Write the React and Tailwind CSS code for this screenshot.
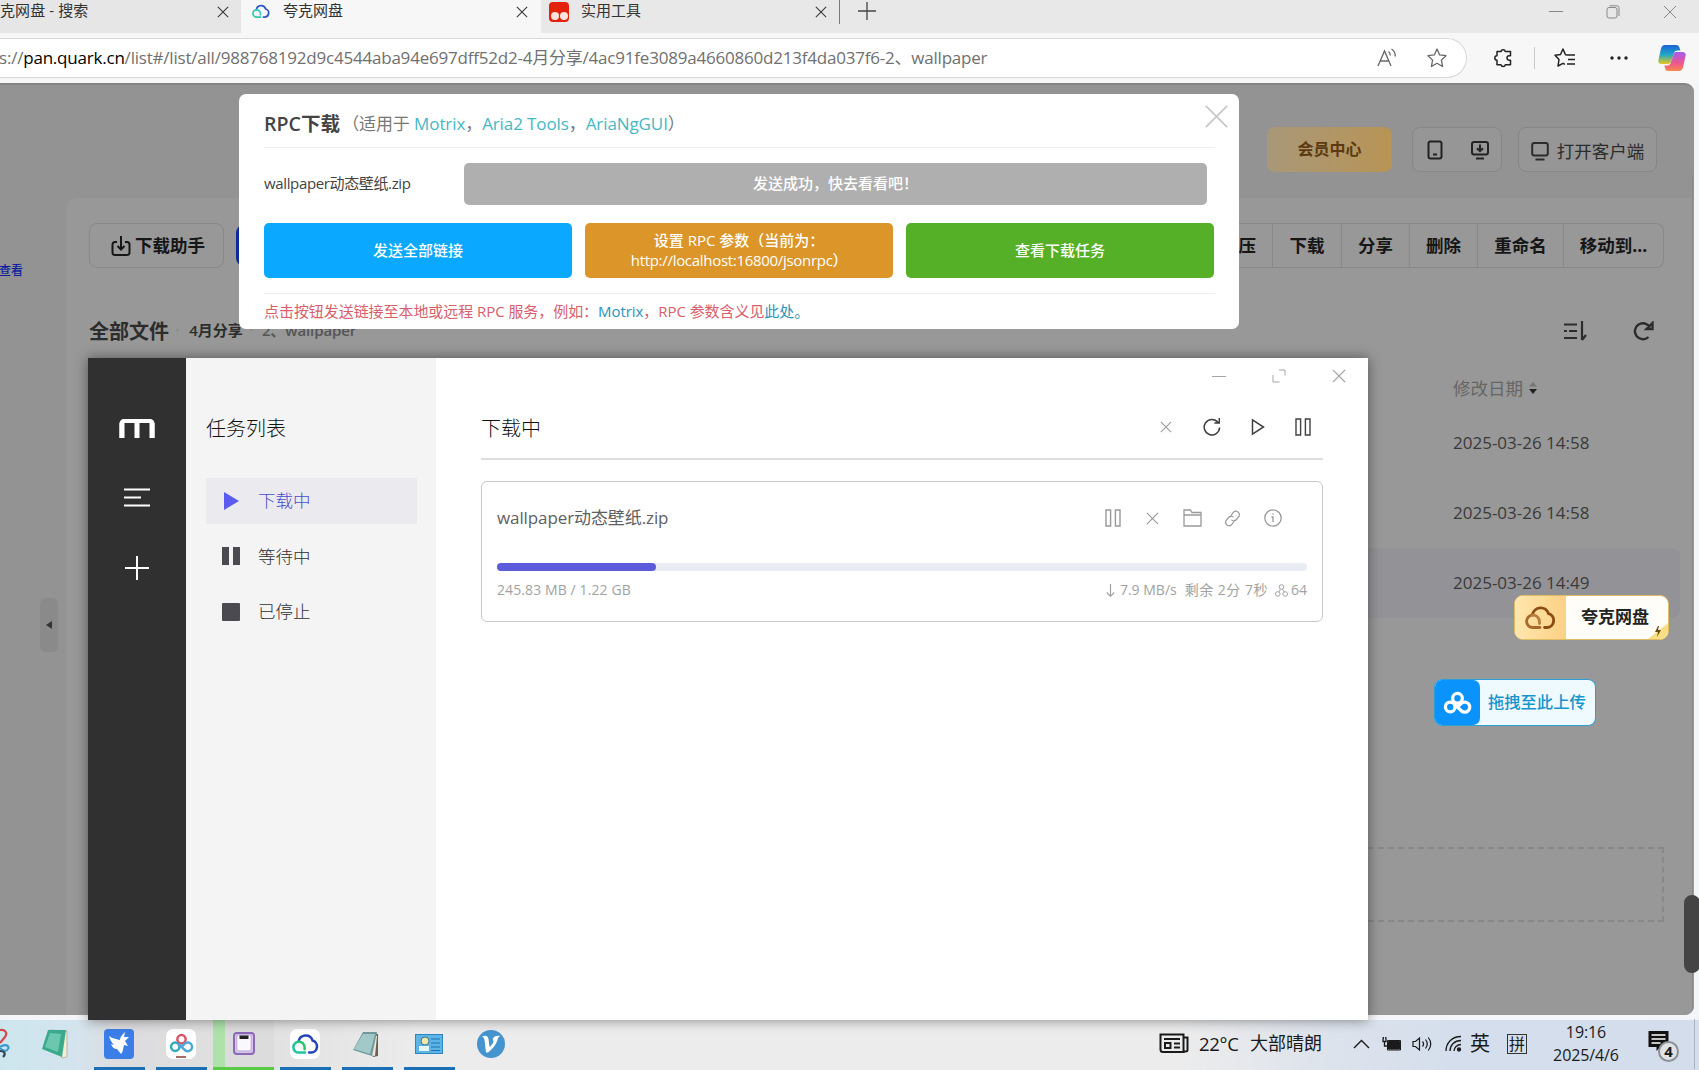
import React, { useState } from 'react'

const fileDates = [
    { id: 1, date: '2025-03-26 14:58' },
    { id: 2, date: '2025-03-26 14:58' },
    { id: 3, date: '2025-03-26 14:49', active: true },
]

const task = {
    name: 'wallpaper动态壁纸.zip',
    done: '245.83 MB',
    total: '1.22 GB',
    percent: 19.6,
}

function Cross({ size = 14, stroke = 1.2, className = '' }) {
    return (
        <svg width={size} height={size} viewBox="0 0 14 14" fill="none" stroke="currentColor" strokeWidth={stroke} className={className}>
            <path d="M1 1l12 12M13 1L1 13" />
        </svg>
    )
}

function PauseOutline() {
    return (
        <svg width="16" height="18" viewBox="0 0 16 18" fill="none" stroke="currentColor" strokeWidth="1.4">
            <path d="M1 1h4.6v16H1zM10.4 1H15v16h-4.6z" />
        </svg>
    )
}

function QuarkCloud({ size, left, right, inner }) {
    return (
        <svg width={size} height={size * 0.8} viewBox="0 0 30 24" fill="none" strokeWidth="2.8" strokeLinecap="round">
            <path d="M7.300 9.500A8 8 0 0 1 22.800 8.300A6.900 6.900 0 0 1 21.500 21.800H19" stroke={right} />
            <path d="M14.500 21.800H7.500A6 6 0 0 1 7.500 9.800" stroke={left} />
            <path d="M7.500 9.800A6.300 6.300 0 0 1 14 16.200V18" stroke={inner} />
        </svg>
    )
}

function BaiduLoops({ size, top, left, right, width = 3 }) {
    return (
        <svg width={size} height={size * 0.8} viewBox="0 0 30 24" fill="none" strokeWidth={width}>
            <circle cx="15" cy="7.500" r="5" stroke={top} />
            <circle cx="7.500" cy="16.500" r="5" stroke={left} />
            <path d="M11 13l7.500 7a5.200 5.200 0 1 0 .5-7.200l-3 2.800" stroke={right} />
        </svg>
    )
}

function TabBar() {
    return (
        <div className="flex h-[33px] shrink-0 items-stretch bg-[#e8e8e8] text-[15px] text-[#333]">
            <div className="flex w-[241px] items-center justify-between bg-[#e6e6e6] pr-[12px] pb-[10px]">
                <span className="whitespace-nowrap pb-[2px] tracking-[0.100px]">克网盘 - 搜索</span>
                <Cross size={12} />
            </div>
            <div className="flex w-[300px] items-center bg-[#f7f7f7] pr-[13px] pb-[10px] pl-[11px]">
                <QuarkCloud size={18} left="#2fc8a8" right="#2a58c8" inner="#3cc8c0" />
                <span className="ml-[13px] flex-1 pb-[2px]">夸克网盘</span>
                <Cross size={12} />
            </div>
            <div className="flex w-[298px] items-center pr-[12px] pb-[10px] pl-[8px]">
                <span className="flex h-[20px] w-[20px] items-end justify-center gap-px rounded-[4px] bg-[#e3220e] pb-[2px]">
                    <i className="size-[8px] rounded-full bg-[#fbe3de]"></i>
                    <i className="size-[8px] rounded-full bg-[#fbe3de]"></i>
                </span>
                <span className="ml-[12px] flex-1 pb-[2px]">实用工具</span>
                <Cross size={12} />
            </div>
            <div className="h-[24px] w-px bg-[#777]"></div>
            <svg className="mt-[2px] ml-[18px]" width="18" height="18" viewBox="0 0 18 18" stroke="#444" strokeWidth="1.3"><path d="M9 0v18M0 9h18" /></svg>
            <div className="ml-auto flex items-center gap-[43px] pr-[22px] pb-[9px] text-[#888]">
                <svg width="14" height="14" viewBox="0 0 14 14" stroke="currentColor"><path d="M0 6.500h14" /></svg>
                <svg width="14" height="14" viewBox="0 0 14 14" fill="none" stroke="currentColor"><rect x="1" y="2.500" width="10" height="10.500" rx="2" /><path d="M3.500.8H11a2 2 0 0 1 2 2V11" /></svg>
                <Cross size={14} stroke={1} />
            </div>
        </div>
    )
}

function AddressBar() {
    return (
        <div className="flex h-[50px] shrink-0 items-center bg-[#f7f7f8] pb-px">
            <div className="flex h-[40px] w-[1467px] items-center rounded-r-[20px] border border-l-0 border-[#d8d8d8] bg-white pr-[19px] text-[17px] text-[#707070]">
                <span className="-ml-px whitespace-nowrap tracking-[-0.210px]">s://<span className="text-black">pan.quark.cn</span>/list#/list/all/988768192d9c4544aba94e697dff52d2-4月分享/4ac91fe3089a4660860d213f4da037f6-2、wallpaper</span>
                <svg className="ml-auto" width="20" height="20" viewBox="0 0 20 20" fill="none" stroke="#666" strokeWidth="1.300"><path d="M1 18L7.500 3 14 18M3.400 13h8.200M11.500 3.500c1.300 1 1.800 2.300 1.800 4M14.500 1c2.800 1.800 3.800 4.300 3.800 7.500" /></svg>
                <svg className="ml-[30px]" width="20" height="20" viewBox="0 0 20 20" fill="none" stroke="#666" strokeWidth="1.300" strokeLinejoin="round"><path d="M10 1l2.700 5.900 6.300.8-4.600 4.400 1.200 6.400L10 15.300l-5.600 3.200 1.200-6.400L1 7.700l6.300-.8z" /></svg>
            </div>
            <svg className="ml-[26px]" width="20" height="20" viewBox="0 0 20 20" fill="none" stroke="#222" strokeWidth="1.500" strokeLinejoin="round"><path d="M4 3.500h4a2.200 2.200 0 0 1 4.300 0H17.500v4.300h-1.300a2.200 2.200 0 0 0 0 4.400h1.300v4.600h-5.200a2.200 2.200 0 0 1-4.300 0H4v-4.600a2.200 2.200 0 0 1 0-4.400z" /></svg>
            <div className="ml-[21px] h-[22px] w-px bg-[#c8c8c8]"></div>
            <svg className="ml-[19px]" width="22" height="20" viewBox="0 0 22 20" fill="none" stroke="#222" strokeWidth="1.500" strokeLinejoin="round"><path d="M13 7l-1.500-.3L9 1 6.500 6.500 1 7.300l4 4.200-1 6.500 5-2.700 2 1M13 7h8M14 11.500h7M13 16h8" /></svg>
            <svg className="ml-[34px]" width="18" height="6" viewBox="0 0 18 6" fill="#222"><circle cx="2" cy="3" r="1.700" /><circle cx="9" cy="3" r="1.700" /><circle cx="16" cy="3" r="1.700" /></svg>
            <svg className="ml-[30px]" width="28" height="28" viewBox="0 0 28 28">
                <defs>
                    <linearGradient id="cpA" x1="0" y1="0" x2="0" y2="1"><stop offset="0" stopColor="#1b62d8" /><stop offset=".5" stopColor="#1fa6c8" /><stop offset="1" stopColor="#e8c820" /></linearGradient>
                    <linearGradient id="cpB" x1="0" y1="0" x2="0" y2="1"><stop offset="0" stopColor="#a45cf0" /><stop offset=".6" stopColor="#f0568c" /><stop offset="1" stopColor="#f88a48" /></linearGradient>
                </defs>
                <path d="M7 1h11c2 0 3 1 3.600 3l.8 2.500h-3c-2 0-3 1-3.600 3l-2.500 8C12.600 19.500 11 20 9 20H4c-3.500 0-4.300-2-3.300-5L3 4.500C3.800 2 5 1 7 1z" fill="url(#cpA)" />
                <path d="M21 27H10c-2 0-2.500-1-3-3l-.6-2.500h3c2 0 3-1 3.600-3l2.500-8C16.100 8.500 17 8 19 8h5c3.500 0 4.300 2 3.300 5L25 23.500c-.8 2.500-2 3.500-4 3.500z" fill="url(#cpB)" />
            </svg>
        </div>
    )
}

function DrivePage() {
    return (
        <div className="relative h-[932px] w-[1694px] overflow-hidden rounded-r-[9px] border-t-2 border-[#858585] bg-[#939393]">
            <div className="flex h-[87px] items-end justify-end gap-[16px] pr-[37px]">
                <div className="mr-[4px] flex h-[45px] w-[125px] items-center justify-center rounded-[8px] bg-gradient-to-r from-[#a89878] to-[#b89454] pb-[2px] text-[16px] font-bold text-[#5c3a10]">会员中心</div>
                <div className="flex h-[45px] w-[90px] items-center justify-center gap-[28px] rounded-[8px] border border-[#868686] bg-[#969696] pt-px pl-px text-[#222]">
                    <svg width="16" height="20" viewBox="0 0 16 20" fill="none" stroke="currentColor" strokeWidth="2"><rect x="1.500" y="1.500" width="13" height="17" rx="2" /><path d="M6 14.500h4" /></svg>
                    <svg width="18" height="20" viewBox="0 0 18 20" fill="none" stroke="currentColor" strokeWidth="2"><rect x="1" y="2" width="16" height="12.500" rx="2" /><path d="M9 4.500V11M6 8.200l3 3 3-3M5 18.500h8" /></svg>
                </div>
                <div className="flex h-[45px] w-[139px] items-center justify-center gap-[8px] rounded-[8px] border border-[#868686] bg-[#969696] pt-[3px] text-[17.500px] whitespace-nowrap text-[#2c2c2c]">
                    <svg width="18" height="20" viewBox="0 0 18 20" fill="none" stroke="currentColor" strokeWidth="2"><rect x="1.200" y="2" width="15.600" height="12.500" rx="2" /><path d="M4.500 18.500h9" /></svg>
                    打开客户端
                </div>
            </div>
            <div className="mt-[26px] ml-[66px] h-[820px] rounded-tl-[12px] bg-[#989898] pt-[25px]">
                <div className="flex h-[45px] items-stretch justify-between pr-[30px] pl-[23px] font-bold text-[#161616]">
                    <div className="flex gap-[12px]">
                        <div className="flex w-[135px] items-center justify-center gap-[4px] rounded-[8px] border border-[#888] pl-[3px] text-[17.500px]">
                            <svg width="20" height="22" viewBox="0 0 20 22" fill="none" stroke="currentColor" strokeWidth="2"><path d="M6 7H4a2.500 2.500 0 0 0-2.500 2.500v8A2.500 2.500 0 0 0 4 20h12a2.500 2.500 0 0 0 2.500-2.500v-8A2.500 2.500 0 0 0 16 7h-2M10 1v13M6.500 11l3.500 3.500 3.500-3.500" /></svg>
                            下载助手
                        </div>
                        <div className="my-[2px] w-[80px] rounded-[8px] bg-[#0d2a9a]"></div>
                    </div>
                    <div className="flex rounded-r-[8px] border border-l-0 border-[#888] text-[17.500px]">
                        <div className="flex w-[70px] items-center justify-end border-r border-[#888] pr-[16px]">压</div>
                        <div className="flex w-[69px] items-center justify-center border-r border-[#888]">下载</div>
                        <div className="flex w-[68px] items-center justify-center border-r border-[#888]">分享</div>
                        <div className="flex w-[68px] items-center justify-center border-r border-[#888]">删除</div>
                        <div className="flex w-[86px] items-center justify-center border-r border-[#888]">重命名</div>
                        <div className="flex w-[99px] items-center justify-center">移动到...</div>
                    </div>
                </div>
                <div className="mt-[48px] flex h-[30px] items-center pr-[40px] pl-[23px] text-[#2c2c2c]">
                    <span className="pt-px text-[20px] font-bold">全部文件</span>
                    <span className="ml-[7px] text-[12px] text-[#7c7c7c]">·</span>
                    <span className="ml-[10px] pb-[2px] text-[15px] font-semibold">4月分享</span>
                    <span className="ml-[7px] text-[12px] text-[#7c7c7c]">·</span>
                    <span className="ml-[9px] pb-[2px] text-[15px] font-semibold tracking-[-0.100px] text-[#555]">2、wallpaper</span>
                    <svg className="ml-auto" width="24" height="21" viewBox="0 0 24 21" fill="none" stroke="#2c2c2c" strokeWidth="2.200"><path d="M1 3.500h13M1 10h3M6 10h8M1 17h13M19 0v19M19 19l4-5" /></svg>
                    <svg className="ml-[46px]" width="21" height="20" viewBox="0 0 21 20" fill="none" stroke="#2c2c2c" strokeWidth="2.400"><path d="M15.500 16A8 8 0 1 1 17 6.500M19.500 2v6h-6z" /></svg>
                </div>
                <div className="mt-[27px] flex h-[30px] items-center pl-[1387px] text-[17.500px] text-[#666]">
                    修改日期
                    <svg className="ml-[6px]" width="8" height="14" viewBox="0 0 8 14"><path d="M4 1l4 4.500H0z" fill="#777" /><path d="M4 13L0 8h8z" fill="#222" /></svg>
                </div>
                <div className="mt-[5px] ml-[23px]">
                    {fileDates.map((f) => (
                        <div key={f.id} className={`flex h-[70px] items-center pl-[1364px] text-[17px] text-[#3a3a3a] ${f.active ? 'mr-[14px] rounded-r-[8px] bg-[#939397]' : ''}`}>{f.date}</div>
                    ))}
                </div>
                <div className="mt-[229px] mr-[30px] ml-[23px] h-[75px] border-2 border-dashed border-[#888]"></div>
            </div>
            <span className="absolute top-[177px] left-[-1px] text-[12px] font-medium text-[#0d1e9e]">查看</span>
            <div className="absolute top-[513px] left-[40px] flex h-[54px] w-[18px] items-center justify-center rounded-[6px] bg-[#8a8a8a]">
                <svg width="6" height="8" viewBox="0 0 6 8" fill="#333"><path d="M6 0v8L0 4z" /></svg>
            </div>
            <div className="absolute top-[90px] right-[1px] bottom-0 w-px bg-[#888]"></div>
        </div>
    )
}

function RpcModal({ onClose }) {
    return (
        <div className="absolute top-[94px] left-[239px] h-[235px] w-[1000px] rounded-[7px] bg-white pr-[24px] pl-[25px] text-[#444]">
            <div className="flex h-[54px] items-center border-b border-[#eee] pt-[7px] whitespace-nowrap">
                <span className="text-[19.600px] font-semibold">RPC下载</span>
                <span className="ml-[2px] text-[17px] tracking-[-0.100px] text-[#777]">（适用于 <span className="text-[#45b8c4]">Motrix</span>，<span className="text-[#45b8c4]">Aria2 Tools</span>，<span className="text-[#45b8c4]">AriaNgGUI</span>）</span>
            </div>
            <button className="absolute top-[10px] right-[10px] text-[#c8c8c8]" onClick={onClose}><Cross size={25} stroke={1} /></button>
            <div className="mt-[15px] flex h-[42px] items-center">
                <span className="w-[200px] pb-[2px] text-[15px] tracking-[-0.360px]">{task.name}</span>
                <button className="h-full w-[743px] rounded-[5px] bg-[#afafaf] pb-[2px] text-[15px] font-medium text-white">发送成功，快去看看吧！</button>
            </div>
            <div className="mt-[18px] flex h-[55px] gap-[13px] text-[15px] leading-[20px] font-medium text-white">
                <button className="w-[308px] rounded-[5px] bg-[#0ba8ff] pb-[2px]">发送全部链接</button>
                <button className="w-[308px] rounded-[5px] bg-[#db9528] pb-[2px]">设置 RPC 参数（当前为：<br /><span className="tracking-[-0.300px]">http://localhost:16800/jsonrpc）</span></button>
                <button className="w-[308px] rounded-[5px] bg-[#55b028] pb-[2px]">查看下载任务</button>
            </div>
            <div className="mt-[15px] border-t border-[#eee] pt-[6px] text-[15px] tracking-[-0.060px] whitespace-nowrap text-[#d9606a]">
                点击按钮发送链接至本地或远程 RPC 服务，例如：<span className="text-[#2b93bd]">Motrix</span>，RPC 参数含义见<span className="text-[#2b93bd]">此处。</span>
            </div>
        </div>
    )
}

function TaskCard() {
    return (
        <div className="mt-[21px] h-[141px] rounded-[6px] border border-[#c9c9cd] px-[15px] font-normal">
            <div className="mt-[23px] flex h-[26px] items-center justify-between">
                <span className="text-[17px] tracking-[-0.100px] text-[#606060]">{task.name}</span>
                <div className="mr-[25px] flex items-center text-[#999]">
                    <PauseOutline />
                    <Cross size={13} className="ml-[25px]" />
                    <svg className="ml-[24px]" width="19" height="18" viewBox="0 0 19 18" fill="none" stroke="currentColor" strokeWidth="1.300"><path d="M1 17V1h6.500l1.500 2.500h9V17zM1 6h17" /></svg>
                    <svg className="ml-[22px]" width="17" height="17" viewBox="0 0 24 24" fill="none" stroke="currentColor" strokeWidth="1.700" strokeLinecap="round"><path d="M9 9.500l3.800-5.800a5 5 0 0 1 8.500 5L18 13a5 5 0 0 1-7 1.300M15 14.500l-3.800 5.800a5 5 0 0 1-8.500-5L6 11a5 5 0 0 1 7-1.300" /></svg>
                    <svg className="ml-[23px]" width="18" height="18" viewBox="0 0 18 18" fill="none" stroke="currentColor" strokeWidth="1.300"><circle cx="9" cy="9" r="8.200" /><path d="M7.500 8H9v5M9 4.500v1.300" /></svg>
                </div>
            </div>
            <div className="mt-[32px] h-[8px] rounded-full bg-[#e9edf3]">
                <div className="h-full rounded-full bg-[#5b5bdb]" style={{ width: `${task.percent}%` }}></div>
            </div>
            <div className="mt-[9px] flex items-center justify-between text-[14px] leading-[20px] text-[#a2a2a2]">
                <span className="tracking-[0.100px]">{task.done} / {task.total}</span>
                <div className="flex items-center">
                    <svg className="mr-[5px]" width="9" height="13" viewBox="0 0 9 13" fill="none" stroke="currentColor" strokeWidth="1.200"><path d="M4.500 0v12M.8 8.500l3.700 3.800 3.700-3.800" /></svg>
                    <span>7.9 MB/s</span>
                    <span className="ml-[8px] tracking-[0.500px]">剩余 2分 7秒</span>
                    <svg className="ml-[7px] mr-[3px]" width="13" height="13" viewBox="0 0 13 13" fill="none" stroke="currentColor"><circle cx="6.500" cy="3" r="2.300" /><circle cx="2.800" cy="10" r="2.300" /><circle cx="10.200" cy="10" r="2.300" /><path d="M5.500 5.200L3.800 8M7.500 5.200L9.200 8" /></svg>
                    <span>64</span>
                </div>
            </div>
        </div>
    )
}

function MotrixWindow() {
    const [current, setCurrent] = useState('active')

    const itemClass = (key) => `flex h-[46px] w-[211px] items-center pb-px pl-[16px] text-[17.500px] ${current === key ? 'bg-[#eaeaef] text-[#4c4cd0]' : 'text-[#303030]'}`

    return (
        <div className="absolute top-[358px] left-[88px] flex h-[662px] w-[1280px] bg-white font-light shadow-[0_0_12px_rgba(0,0,0,0.450)]">
            <aside className="flex w-[98px] flex-col items-center bg-[#303030] pt-[61px]">
                <svg width="36" height="19" viewBox="0 0 36 19" fill="none" stroke="#fff"><path d="M2.500 19V4.500a2.500 2.500 0 0 1 2.500-2.500h26a2.500 2.500 0 0 1 2.500 2.500V19" strokeWidth="4" /><path d="M3 4v15M18 2.500V19M33 4v15" strokeWidth="5" /></svg>
                <svg className="mt-[50px]" width="26" height="19" viewBox="0 0 26 19" stroke="#fff" strokeWidth="2"><path d="M0 1.500h26M0 9.500h17M0 17.500h26" /></svg>
                <svg className="mt-[48px]" width="26" height="26" viewBox="0 0 26 26" stroke="#fff" strokeWidth="2"><path d="M13 1v24M1 13h24" /></svg>
            </aside>
            <nav className="flex w-[250px] flex-col bg-[#f4f4f5] pl-[20px]">
                <h2 className="mt-[56px] h-[30px] text-[20px] leading-[30px] text-[#111]">任务列表</h2>
                <div className="mt-[34px] flex flex-col gap-[9.500px]">
                    <button className={itemClass('active')} onClick={() => setCurrent('active')}>
                        <svg className="mr-[18px]" width="18" height="18" viewBox="0 0 18 18" fill="#5b5bf0"><path d="M2 0l15 9-15 9z" /></svg>
                        下载中
                    </button>
                    <button className={itemClass('waiting')} onClick={() => setCurrent('waiting')}>
                        <svg className="mr-[18px]" width="18" height="18" viewBox="0 0 18 18" fill="#4a4a50"><path d="M0 0h7v18H0zM11 0h7v18h-7z" /></svg>
                        等待中
                    </button>
                    <button className={itemClass('stopped')} onClick={() => setCurrent('stopped')}>
                        <svg className="mr-[18px]" width="18" height="18" viewBox="0 0 18 18" fill="#4a4a50"><rect width="18" height="18" rx="1" /></svg>
                        已停止
                    </button>
                </div>
            </nav>
            <main className="flex flex-1 flex-col pr-[45px] pl-[45px]">
                <div className="-mr-[23px] flex h-[36px] items-center justify-end gap-[46px] text-[#a5a5a5]">
                    <svg width="14" height="14" viewBox="0 0 14 14" stroke="currentColor"><path d="M0 7.500h14" /></svg>
                    <svg width="14" height="14" viewBox="0 0 14 14" fill="none" stroke="currentColor"><path d="M7 1h6v5.500M1 6v7h6.500" /></svg>
                    <Cross size={14} stroke={1.1} />
                </div>
                <div className="flex h-[66px] items-center justify-between border-b-2 border-[#dedee2] pt-[5px]">
                    <h1 className="text-[20px] text-[#111]">下载中</h1>
                    <div className="mr-[12px] flex items-center pb-[3px] text-[#404040]">
                        <Cross size={12} className="text-[#999]" />
                        <svg className="ml-[31px]" width="18" height="18" viewBox="0 0 18 18" fill="none" stroke="currentColor" strokeWidth="1.500"><path d="M16.600 9.500A7.700 7.700 0 1 1 15 4.500M16.300 0v5h-5" /></svg>
                        <svg className="ml-[30px]" width="14" height="18" viewBox="0 0 14 18" fill="none" stroke="currentColor" strokeWidth="1.500"><path d="M1.500 1.800L12.500 9l-11 7.200z" /></svg>
                        <span className="ml-[30px]"><PauseOutline /></span>
                    </div>
                </div>
                <TaskCard />
            </main>
        </div>
    )
}

function FloatingBadges() {
    return (
        <>
            <div className="absolute top-[595px] left-[1514px] flex h-[45px] w-[155px] overflow-hidden rounded-[9px] border border-[#e0bd62] bg-[#fffdf8]">
                <div className="flex w-[51px] items-center justify-center bg-gradient-to-r from-[#ffe6ae] to-[#fbd184]"><QuarkCloud size={31} left="#a8692a" right="#8d4c12" inner="#b9803a" /></div>
                <span className="pt-[8px] pl-[15px] text-[17px] leading-[26px] font-bold text-[#222]">夸克网盘</span>
                <svg className="absolute right-0 bottom-0" width="20" height="16" viewBox="0 0 20 16"><path d="M20 0v16H0z" fill="#f7df86" /><path d="M10 3l-3 6h3l-1 5 4-7h-3l1-4z" fill="#6b4a10" /></svg>
            </div>
            <div className="absolute top-[679px] left-[1434px] flex h-[47px] w-[162px] overflow-hidden rounded-[8px] border border-[#2c9fd8] bg-[#eefaff]">
                <div className="flex w-[45px] items-center justify-center rounded-r-[7px] bg-[#0a93fb]"><BaiduLoops size={29} top="#fff" left="#fff" right="#fff" width={3.4} /></div>
                <span className="pl-[8px] text-[16.300px] leading-[44px] font-medium whitespace-nowrap text-[#1594cf]">拖拽至此上传</span>
            </div>
            <div className="absolute top-[895px] left-[1684px] h-[78px] w-[16px] rounded-[8px] bg-[#444]"></div>
        </>
    )
}

function Taskbar() {
    return (
        <footer className="flex h-[50px] shrink-0 bg-[linear-gradient(90deg,#cde6ee_0px,#d4e4ee_75px,#dcdcde_120px,#e2e2e2_280px,#ececec_420px,#ececec_1180px,#dde3ec_1330px,#d5deec_1450px,#d3ddeb_1699px)] text-[#1a1a1a]">
            <div className="flex w-[88px] items-center pb-[2px]">
                <svg width="10" height="32" viewBox="0 0 10 32" fill="none" strokeWidth="2.200"><path d="M0 2c5-1 8 3 5 7l-5 6" stroke="#d34848" /><path d="M0 19c5-4 10-1 8 2s-5 2-8-1" stroke="#3b9bd0" /><path d="M0 23c5 0 6 3 3 6" stroke="#345" /></svg>
                <svg className="ml-[30px]" width="30" height="30" viewBox="0 0 30 30"><path d="M10 1l17 1v26l-5 1z" fill="#f5ecd8" stroke="#9a9a78" strokeWidth=".6" /><path d="M8 1h18l-4 27L2 20z" fill="#3aa98c" /><path d="M10 4l11 1-3 18L5 18z" fill="#6cc7af" /></svg>
            </div>
            <div className="flex w-[62px] flex-col items-center">
                <div className="flex h-[47px] items-center">
                    <svg width="30" height="30" viewBox="0 0 30 30"><rect width="30" height="30" rx="4" fill="#3c7ee8" /><path d="M5 7c4 3 8 3 11 4 0-3 3-6 5-8l-1 5h5l-4 4 3 5-4-1c-1 4-1 7-3 9l-4-5c-3 0-5-2-6-5l3 1C7 13 6 10 5 7z" fill="#fff" /></svg>
                </div>
                <div className="h-[3px] w-[51px] bg-[#1b6fb4]"></div>
            </div>
            <div className="flex w-[62px] flex-col items-center">
                <div className="flex h-[47px] items-center">
                    <div className="flex size-[30px] flex-col items-center justify-center rounded-[7px] bg-white pt-[4px]">
                        <BaiduLoops size={25} top="#d9556a" left="#34a8bd" right="#4ba9d6" width={3} />
                        <i className="mt-[3px] h-[2px] w-[10px] bg-[#a86a62]"></i>
                    </div>
                </div>
                <div className="h-[3px] w-[51px] bg-[#1b6fb4]"></div>
            </div>
            <div className="ml-px flex w-[61px] flex-col bg-[linear-gradient(90deg,#aee2aa_12px,#dcdcdc_12px)]">
                <div className="flex h-[47px] items-center justify-center">
                    <svg width="22" height="23" viewBox="0 0 22 23"><rect x="1" y="1" width="20" height="21" rx="3" fill="#d9c8ea" stroke="#8c68b8" strokeWidth="2" /><rect x="3.800" y="3" width="14.400" height="16" rx="2" fill="#faf8fc" stroke="#b9a2d8" /><path d="M6.500 3.500h9v3.500h-9z" fill="#222" /></svg>
                </div>
                <div className="h-[3px] bg-[#5acb46]"></div>
            </div>
            <div className="flex w-[62px] flex-col items-center">
                <div className="flex h-[47px] items-center">
                    <div className="flex size-[30px] items-center justify-center rounded-[7px] bg-white"><QuarkCloud size={27} left="#22c3a0" right="#2545b8" inner="#27c46c" /></div>
                </div>
                <div className="h-[3px] w-[51px] bg-[#1b6fb4]"></div>
            </div>
            <div className="flex w-[62px] flex-col items-center">
                <div className="flex h-[47px] items-center pr-[2px]">
                    <svg width="28" height="26" viewBox="0 0 28 26"><path d="M11 1l15 2v22l-5 1z" fill="#6b6256" /><path d="M21 3l4 2-2 20-6-1z" fill="#efe9dc" /><path d="M11 1h14l-5 24L1 19z" fill="#6f9a9c" /><path d="M11 3h12l-5 20L2 18z" fill="#a2c8c8" /></svg>
                </div>
                <div className="h-[3px] w-[51px] bg-[#1b6fb4]"></div>
            </div>
            <div className="flex w-[62px] flex-col items-center">
                <div className="flex h-[47px] items-center">
                    <svg width="28" height="20" viewBox="0 0 28 20"><rect x=".5" y=".5" width="27" height="19" fill="#5db4e6" stroke="#2d86c0" /><circle cx="10" cy="7" r="4" fill="#f1e7a8" stroke="#3d7890" /><path d="M4 12h10v5H4z" fill="#e6f4fb" /><path d="M16 5h9M16 9h9M16 13h9M16 16.500h9" stroke="#1d74b0" /></svg>
                </div>
                <div className="h-[3px] w-[51px] bg-[#1b6fb4]"></div>
            </div>
            <div className="flex w-[62px] items-center justify-center pb-[2px]">
                <svg width="28" height="28" viewBox="0 0 28 28"><circle cx="14" cy="14" r="14" fill="#4494d0" /><path d="M5 6.500c3-1.500 6-.5 6.500 2.500l1 8C16 14 17.500 11 15.500 9 17 6 20 5 23.500 6c-2 .5-2.500 2-3 4-1.500 5-5 9-9.500 12.500H9L7.500 10C7.300 8.500 6.500 7.500 5 6.500z" fill="#fff" /></svg>
            </div>
            <div className="ml-auto flex items-center pr-[4px] pb-[3px]">
                <svg width="30" height="21" viewBox="0 0 30 21" fill="none" stroke="#1a1a1a" strokeWidth="2"><path d="M1.500 1.500h23V19H4a2.500 2.500 0 0 1-2.500-2.500zM24.500 4.500h4V17c0 2-4 2-4 0M5 6h16M15 10.500h6M15 14.500h6" /><rect x="6" y="10" width="5.500" height="5" /></svg>
                <span className="ml-[10px] w-[51px] text-[18.500px] tracking-[-0.300px]">22°C</span>
                <span className="w-[72px] text-[18px]">大部晴朗</span>
                <svg className="ml-[31px]" width="17" height="10" viewBox="0 0 17 10" fill="none" stroke="currentColor" strokeWidth="1.400"><path d="M1 9l7.500-7.500L16 9" /></svg>
                <svg className="ml-[12px]" width="20" height="14" viewBox="0 0 20 14" fill="none" stroke="currentColor"><path d="M5.500 3.500H18.500v9.500h-13z" /><path d="M6.500 4.500h11v7.500h-11z" fill="currentColor" /><path d="M1 1.500v3h3v-3M2.500 4.500V9H5M1.300 0v2M3.800 0v2" strokeWidth="1.300" /></svg>
                <svg className="ml-[10px]" width="20" height="16" viewBox="0 0 20 16" fill="none" stroke="currentColor" strokeWidth="1.200"><path d="M1 5.500h2.500L7.500 2v12l-4-3.500H1zM10.500 5.500c1.300 1.500 1.300 3.500 0 5M13.500 3.500c2.200 2.800 2.200 6.200 0 9M16.300 1.500c3 4 3 9 0 13" /></svg>
                <svg className="ml-[13px]" width="17" height="17" viewBox="0 0 17 17" fill="none" stroke="currentColor" strokeWidth="1.300"><path d="M1 16C1 8 7 1.500 16 1.500M5 16C5 10 9.500 5.500 16 5.500M9 16c0-3.500 3-6.500 7-6.500" /><circle cx="14" cy="14.500" r="1.500" fill="currentColor" /></svg>
                <span className="ml-[8px] w-[20px] text-[20px] leading-[28px]">英</span>
                <span className="ml-[17px] flex size-[20px] items-center justify-center border border-[#333] text-[16px] leading-[18px]">拼</span>
                <div className="ml-[25px] w-[68px] text-center text-[16px] leading-[23px] tracking-[-0.100px] whitespace-nowrap">
                    <div>19:16</div>
                    <div>2025/4/6</div>
                </div>
                <div className="relative ml-[28px] h-[34px] w-[31px] pt-[2px]">
                    <svg width="21" height="22" viewBox="0 0 20 22"><path d="M0 2h20v16h-8l-4 4v-4H0z" fill="#111" /><path d="M3 6h14M3 10h14M3 14h9" stroke="#fff" strokeWidth="1.500" /></svg>
                    <span className="absolute right-0 -bottom-px flex size-[21px] items-center justify-center rounded-full border-2 border-[#8c8f94] bg-[#dfe2e6] text-[15px] font-bold">4</span>
                </div>
                <div className="ml-[15px] h-[50px] w-px bg-[#aab4c4]"></div>
            </div>
        </footer>
    )
}

function App() {
    const [showRpc, setShowRpc] = useState(true)

    return (
        <div className="relative flex h-[1070px] w-[1699px] flex-col overflow-hidden bg-[#f3f5f8] font-['Open_Sans','Noto_Sans_CJK_SC',sans-serif]">
            <TabBar />
            <AddressBar />
            <div className="h-[937px] shrink-0">
                <DrivePage />
            </div>
            <Taskbar />
            {showRpc && <RpcModal onClose={() => setShowRpc(false)} />}
            <MotrixWindow />
            <FloatingBadges />
        </div>
    )
}

export default App
